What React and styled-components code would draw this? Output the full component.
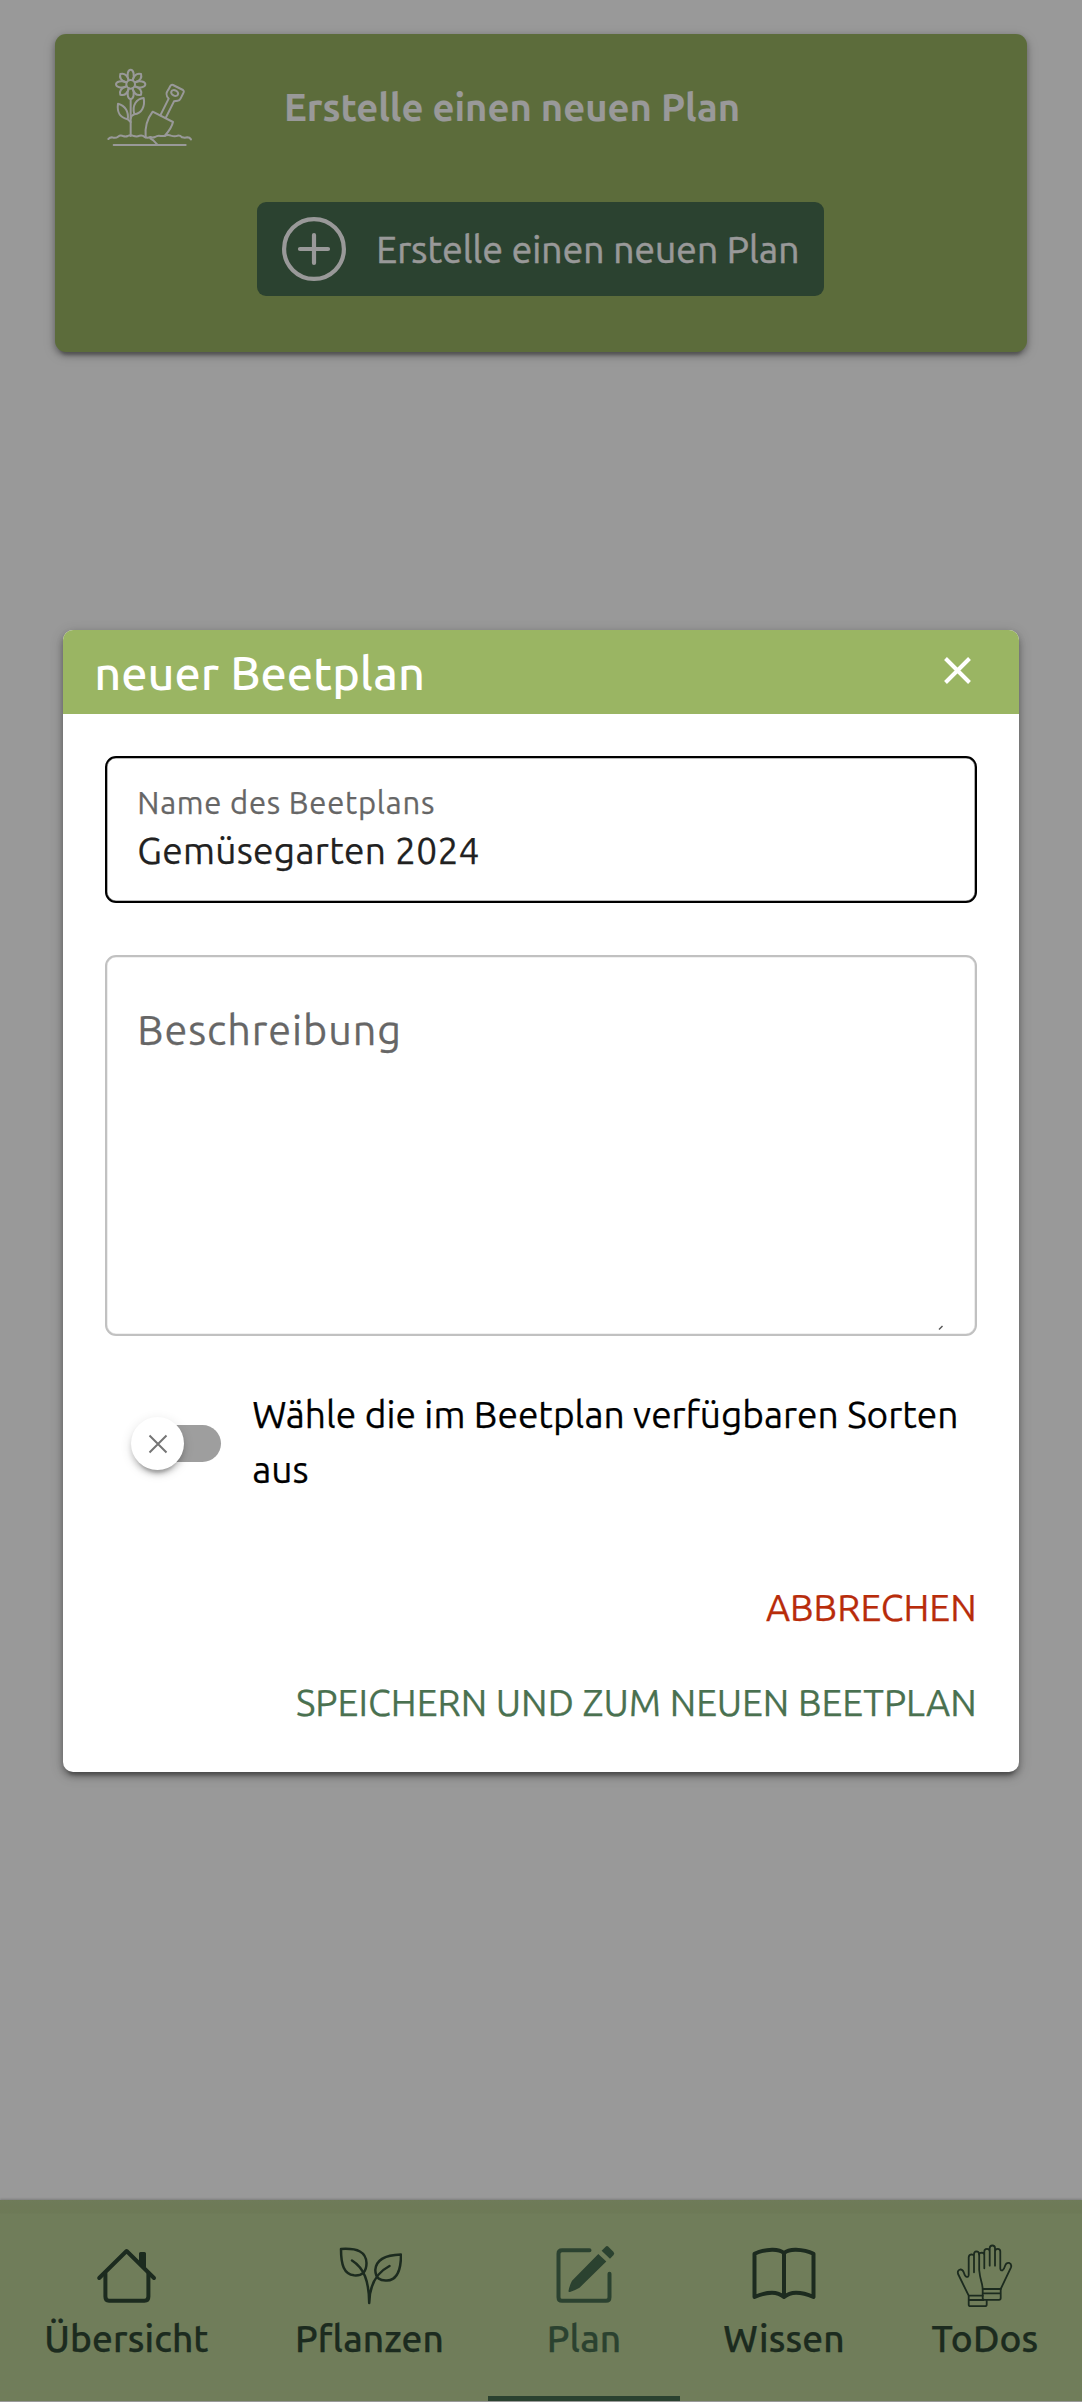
import React from 'react';
import styled, { createGlobalStyle, css } from 'styled-components';

const GlobalStyle = createGlobalStyle`
  *, *::before, *::after { box-sizing: border-box; }
  body {
    margin: 0;
    background: #fff;
    font-family: Ubuntu, "Noto Sans", sans-serif;
    font-size: 37.1px;
    -webkit-text-stroke: 0.25px;
  }
  button { font: inherit; border: 0; background: none; padding: 0; cursor: pointer; }
`;

const Page = styled.div`
  position: relative;
  display: flex;
  flex-direction: column;
  justify-content: space-between;
  height: 2402px;
  overflow: hidden;
`;

/* ---------- plan card ---------- */

const Card = styled.section`
  display: flex;
  flex-direction: column;
  align-items: center;
  gap: 47px;
  height: 318px;
  margin: 34px 55.5px 0 55px;
  padding: 21px 40px 0;
  border-radius: 11px;
  background: #9ab563;
  box-shadow: 0 8px 3px -5px rgba(0, 0, 0, 0.2), 0 3px 6px rgba(0, 0, 0, 0.3),
    0 3px 13px rgba(0, 0, 0, 0.16);
`;

const CardHead = styled.div`
  display: flex;
  align-items: center;
  align-self: stretch;
  gap: 79px;
`;

const CardTitle = styled.h2`
  margin: 3px 0 0;
  color: #fff;
  font-size: 38.2px;
  font-weight: 700;
  line-height: 50px;
  white-space: nowrap;
  -webkit-text-stroke: 0;
`;

const CreateButton = styled.button`
  display: flex;
  align-items: center;
  gap: 30px;
  width: 567px;
  height: 94px;
  padding-left: 25px;
  border-radius: 9px;
  background: #496e50;
  color: #fff;
  line-height: 50px;
  letter-spacing: 0.12px;
  white-space: nowrap;
  -webkit-text-stroke: 0.5px;
`;

/* ---------- bottom navigation ---------- */

const Nav = styled.nav`
  display: grid;
  grid-template-columns: 249px 237px 192px 208px 1fr;
  height: 202px;
  padding-left: 2px;
  border-bottom: 1px solid #fff;
  background: linear-gradient(#b9cd94 0, #b6cb91 13px, #bbd096 14px);
  box-shadow: 0 -1px 2px rgba(0, 0, 0, 0.18);
`;

const NavTab = styled.a`
  display: flex;
  flex-direction: column;
  align-items: center;
  padding-top: 44px;
  color: #2f4834;
  font-weight: 500;
  line-height: 50px;
  letter-spacing: 0.1px;
  ${(p) =>
    p.$active &&
    css`
      color: #496e50;
      border-bottom: 5px solid #496e50;
    `}

  svg { margin-bottom: 5px; }
`;

/* ---------- dialog ---------- */

const Overlay = styled.div`
  position: absolute;
  inset: 0;
  display: flex;
  align-items: center;
  justify-content: center;
  background: rgba(0, 0, 0, 0.4);
`;

const Dialog = styled.div`
  width: 955.5px;
  border-radius: 10px;
  overflow: hidden;
  background: #fff;
  box-shadow: 0 8px 3px -5px rgba(0, 0, 0, 0.2), 0 4px 6px rgba(0, 0, 0, 0.3),
    0 3px 14px rgba(0, 0, 0, 0.2);
`;

const DialogHeader = styled.header`
  display: flex;
  align-items: center;
  justify-content: space-between;
  height: 84px;
  padding: 0 48px 0 31px;
  background: #9ab563;
  color: #fff;
`;

const DialogTitle = styled.h1`
  margin: 2px 0 0;
  font-size: 46.8px;
  font-weight: 500;
  line-height: 60px;
  -webkit-text-stroke: 0;
`;

const CloseButton = styled.button`
  display: flex;
  margin-bottom: 3px;
  color: #fff;
`;

const DialogBody = styled.div`
  display: flex;
  flex-direction: column;
  padding: 42px 42px 22px;
`;

const Field = styled.div`
  display: flex;
  flex-direction: column;
  height: ${(p) => p.$height}px;
  padding: ${(p) => p.$top}px 30px 0;
  border: 2px solid ${(p) => (p.$focused ? '#000' : '#c1c1c1')};
  border-radius: 11px;
  box-shadow: inset 0 0 0 0.6px ${(p) => (p.$focused ? '#777' : '#e2e2e2')};
  & + & { margin-top: 52px; }
`;

const FieldLabel = styled.label`
  color: #666;
  font-size: ${(p) => (p.$floating ? 31 : 41.3)}px;
  line-height: ${(p) => (p.$floating ? 48 : 60)}px;
  letter-spacing: ${(p) => (p.$floating ? 0.75 : 0.95)}px;
`;

const FieldInput = styled.input`
  height: 47px;
  padding: 0;
  border: 0;
  outline: 0;
  background: none;
  color: #212121;
  font: inherit;
  line-height: 47px;
  letter-spacing: 0.3px;
`;

const ResizeGrip = styled.svg`
  align-self: flex-end;
  margin: auto 0 4px;
`;

const ToggleRow = styled.div`
  display: flex;
  align-items: center;
  gap: 31px;
  margin-top: 48px;
  padding-left: 26px;
`;

const Switch = styled.div`
  display: flex;
  align-items: center;
  flex: none;
  width: 85px;
  height: 37px;
  margin: 6px 0 0 5px;
  border-radius: 19px;
  background: #9e9e9e;
`;

const Knob = styled.span`
  display: flex;
  align-items: center;
  justify-content: center;
  flex: none;
  width: 53px;
  height: 53px;
  margin-left: -5px;
  border-radius: 50%;
  background: #fff;
  box-shadow: 0 8px 3px -5px rgba(0, 0, 0, 0.2), 0 5px 5px rgba(0, 0, 0, 0.14),
    0 3px 12px rgba(0, 0, 0, 0.12);
`;

const ToggleText = styled.p`
  margin: 3px 0 0;
  color: #000;
  line-height: 54.6px;
`;

const Actions = styled.div`
  display: flex;
  flex-direction: column;
  align-items: flex-end;
  margin-top: 63px;
`;

const ActionButton = styled.button`
  height: 95px;
  color: ${(p) => (p.$danger ? '#b82c0b' : '#4a7150')};
  letter-spacing: 0.05px;
  text-transform: uppercase;
`;

/* ---------- icons ---------- */

const GardenIcon = () => (
  <svg width="110" height="100" viewBox="0 0 330 300" fill="none" stroke="#fff" strokeWidth="6" strokeLinecap="round" strokeLinejoin="round">
    <circle cx="107" cy="88" r="13" />
    {[0, 90, 180, 270].map((a) => (
      <path key={a} transform={`rotate(${a} 107 88)`} d="M101 76 C94 60 99 44 107 44 C115 44 120 60 113 76" />
    ))}
    {[45, 135, 225, 315].map((a) => (
      <path key={a} transform={`rotate(${a} 107 88)`} d="M101 73 C95 60 96 50 107 44 C118 50 119 60 113 73" />
    ))}
    <path d="M107 132 V243" />
    <path d="M69 146 C66 168 70 186 98 193 C102 172 91 151 69 146 Z M98 193 L107 201" />
    <path d="M146 129 C125 131 110 150 118 178 C140 175 151 154 146 129 Z M118 178 Q108 181 107 190" />
    <path d="M152 247 C149 216 156 192 173 170 L234 201 C230 219 221 229 209 243" />
    <path d="M196 181 L221 131 C211 120 213 113 220 104 L226 93 Q229 88 234 90 L264 105 Q268 108 266 112 L257 130 Q254 137 248 137 L237 139 L212 189" />
    <ellipse cx="239" cy="114" rx="11" ry="8" transform="rotate(27 239 114)" />
    <path d="M40 252 Q47 245 55 248 Q63 250 69 245 Q76 239 84 243 Q92 246 98 243 Q107 238 116 243 Q126 246 134 242 Q143 240 149 246 Q158 250 166 246 Q173 249 180 246 Q189 240 197 243 L209 243 Q218 237 228 242 Q240 246 248 242 Q256 241 261 247 Q270 249 277 247 Q284 247 288 253" />
    <path d="M56 270 H272 M166 250 L175 256 L187 269" />
  </svg>
);

const PlusCircleIcon = () => (
  <svg width="64" height="64" viewBox="0 0 64 64" fill="none" stroke="currentColor" strokeWidth="4.2" strokeLinecap="round">
    <circle cx="32" cy="32" r="29.9" />
    <path d="M32 18 V46 M18 32 H46" />
  </svg>
);

const CloseIcon = ({ size, weight, color = 'currentColor' }) => (
  <svg width={size} height={size} viewBox={`0 0 ${size} ${size}`} stroke={color} strokeWidth={weight}>
    <path d={`M1.5 1.5 L${size - 1.5} ${size - 1.5} M${size - 1.5} 1.5 L1.5 ${size - 1.5}`} />
  </svg>
);

const NavIcon = ({ children }) => (
  <svg width="64" height="64" viewBox="0 0 64 64" fill="none" stroke="currentColor" strokeWidth="4" strokeLinecap="round" strokeLinejoin="round">
    {children}
  </svg>
);

const HouseIcon = () => (
  <NavIcon>
    <path d="M4.2 34 L31.6 7 L59 34" />
    <path d="M10.4 29.5 V52.5 Q10.4 56.7 14 56.7 H49.5 Q53.4 56.7 53.4 52.5 V29.5" />
    <path d="M45.5 9.5 H49.5 V23 L45.5 19 Z" fill="currentColor" strokeWidth="3" />
  </NavIcon>
);

const SproutIcon = () => (
  <NavIcon>
    <g strokeWidth="2.5">
      <path d="M3 5 C20 4 28 8 28.5 19 C28.5 28 24 32 16 31.3 C6 30 3 21 3 5 Z" />
      <path d="M63 10.5 C46 11 38 16 37.3 26 C37.5 34 42 37 49 36.5 C59 36 63 27 63 10.5 Z" />
      <path d="M14 16.5 C26 24 31 37 31.2 59 C31.5 41 38 29 51.5 22" />
    </g>
  </NavIcon>
);

const PencilIcon = () => (
  <NavIcon>
    <path d="M37.5 6.3 H10 Q6.5 6.3 6.5 9.8 V53.3 Q6.5 56.8 10 56.8 H54 Q57.5 56.8 57.5 53.3 V29.8" />
    <g fill="currentColor" stroke="none" transform="translate(0 -1.5)">
      <path d="M46.3 11.5 L54.3 19 L27.5 45.3 Q23 48 18 49.5 Q16 50 16.6 48 Q17.5 43 20 38.3 Z" />
      <path d="M49.6 8.2 L53.6 4.2 Q55 3 56.4 4.2 L61.4 9.2 Q63 11 61.6 12.6 L58 16.3 Z" />
    </g>
  </NavIcon>
);

const BookIcon = () => (
  <NavIcon>
    <path d="M32 9 Q28 5.5 20 5.7 Q10 6 2.5 9.8 V53 Q12 48.7 20 48.7 Q27 48.8 32 53 Q37 48.8 44 48.7 Q52 48.7 61.5 53 V9.8 Q54 6 44 5.7 Q36 5.5 32 9 V53" />
  </NavIcon>
);

const GlovesIcon = () => (
  <NavIcon>
    <g strokeWidth="1.8">
      <path d="M26.2 26 V10 Q26.4 8.6 28.8 8.6 Q31.3 8.8 31.3 11 M31.3 24.3 V7.4 Q31.3 4.8 34 4.8 Q36.7 4.8 36.7 7.4 M36.7 21.7 V4.2 Q36.7 1.5 39.4 1.5 Q42 1.5 42 4.2 V21.7 M42 7.6 Q42 4.8 44.7 4.8 Q47.3 4.8 47.3 7.6 V24.5 Q47.6 27 49.6 26.3 Q51 25.5 52.2 21.5 Q53.4 18.4 56 18.9 Q59 20 58 23.3 L47.7 45 M26.2 26 Q26.8 32 28.2 37 Q29.4 41 29.7 45" />
      <path d="M29.7 45 H47.7 V54 Q47.7 55.8 46 55.8 H31.4 Q29.7 55.8 29.7 54 Z M29.7 49.3 H47.7" />
      <path d="M26.2 10.5 Q26 7.4 23.4 7.4 Q21 7.6 21 10.5 V28.3 M21 12 Q20.6 10.4 18.3 10.4 Q15.7 10.8 15.7 13.5 V31 Q15.5 33.3 13.6 32.8 Q12 32.5 10.8 28.5 Q9.7 25.3 7.2 25.5 Q4 26.5 5.1 30 L15.7 51.7 V60.4 Q15.7 62.2 17.5 62.2 H31.8 Q33.7 62.2 33.7 60.4 V56 M15.7 51.7 H29.7 M15.7 56 H30.5" />
    </g>
  </NavIcon>
);

const tabs = [
  { label: 'Übersicht', Icon: HouseIcon },
  { label: 'Pflanzen', Icon: SproutIcon },
  { label: 'Plan', Icon: PencilIcon, active: true },
  { label: 'Wissen', Icon: BookIcon },
  { label: 'ToDos', Icon: GlovesIcon },
];

export default function App() {
  return (
    <Page>
      <GlobalStyle />
      <Card>
        <CardHead>
          <GardenIcon />
          <CardTitle>Erstelle einen neuen Plan</CardTitle>
        </CardHead>
        <CreateButton>
          <PlusCircleIcon />
          Erstelle einen neuen Plan
        </CreateButton>
      </Card>

      <Nav>
        {tabs.map(({ label, Icon, active }) => (
          <NavTab key={label} $active={active}>
            <Icon />
            {label}
          </NavTab>
        ))}
      </Nav>

      <Overlay>
        <Dialog role="dialog">
          <DialogHeader>
            <DialogTitle>neuer Beetplan</DialogTitle>
            <CloseButton aria-label="Schließen">
              <CloseIcon size={27} weight={4} />
            </CloseButton>
          </DialogHeader>
          <DialogBody>
            <Field $height={147} $top={21} $focused>
              <FieldLabel $floating htmlFor="name">Name des Beetplans</FieldLabel>
              <FieldInput id="name" defaultValue="Gemüsegarten 2024" />
            </Field>
            <Field $height={381} $top={43}>
              <FieldLabel>Beschreibung</FieldLabel>
              <ResizeGrip width="8" height="5" viewBox="0 0 8 5" stroke="#555" strokeWidth="1.4">
                <path d="M2 4.5 L5.5 1" />
              </ResizeGrip>
            </Field>
            <ToggleRow>
              <Switch>
                <Knob>
                  <CloseIcon size={20} weight={2} color="#757575" />
                </Knob>
              </Switch>
              <ToggleText>
                Wähle die im Beetplan verfügbaren Sorten
                <br />
                aus
              </ToggleText>
            </ToggleRow>
            <Actions>
              <ActionButton $danger>Abbrechen</ActionButton>
              <ActionButton>Speichern und zum neuen Beetplan</ActionButton>
            </Actions>
          </DialogBody>
        </Dialog>
      </Overlay>
    </Page>
  );
}
